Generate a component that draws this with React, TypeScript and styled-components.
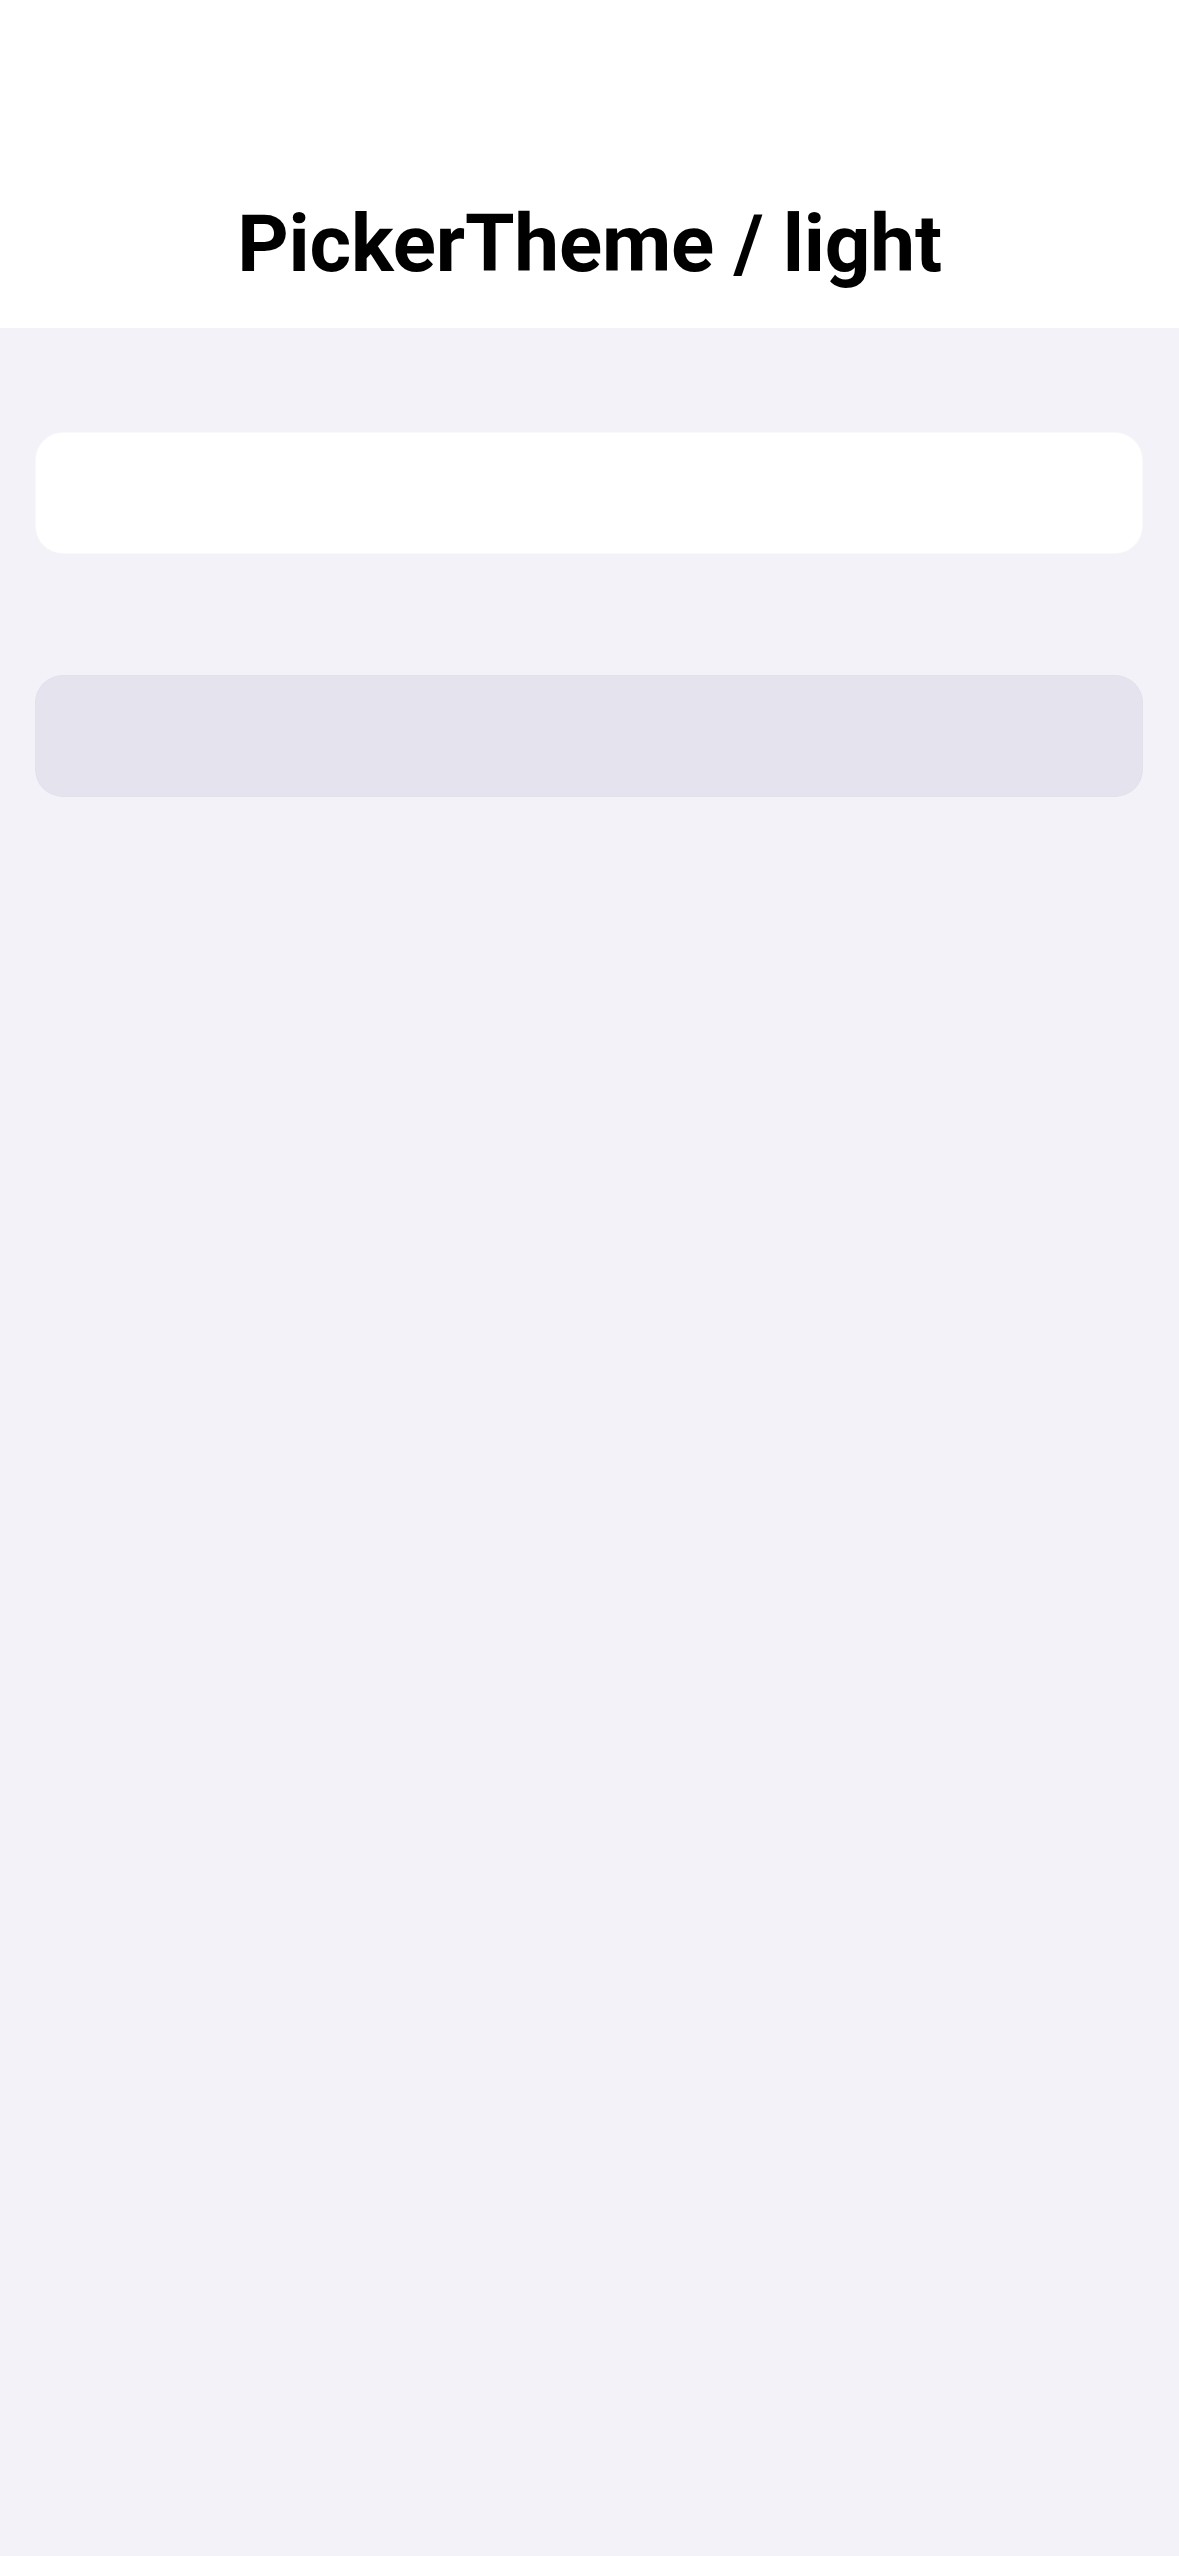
import React from "react";
import styled, { createGlobalStyle } from "styled-components";

const Global = createGlobalStyle`
  html, body { margin: 0; padding: 0; background: #f2f2f8; }
  body { font-family: Roboto, "Liberation Sans", Arial, sans-serif; }
  #root { min-height: 2556px; background: #f2f2f8; }
`;

const Page = styled.div`
  display: flex;
  flex-direction: column;
  min-height: 2556px;
  background: #f2f2f8;
`;

const Header = styled.header`
  height: 328px;
  background: #ffffff;
  display: flex;
  align-items: flex-end;
  justify-content: center;
  box-sizing: border-box;
  padding-bottom: 44px;
`;

const Title = styled.h1`
  margin: 0;
  font-family: Roboto, "Liberation Sans", Arial, sans-serif;
  font-weight: 700;
  font-size: 80px;
  letter-spacing: -0.2px;
  line-height: 1;
  color: #000000;
`;

const Content = styled.main`
  display: flex;
  flex-direction: column;
  gap: 121px;
  padding: 104px 36px 0 35px;
`;

const Card = styled.div<{ $tone: "white" | "fill" }>`
  height: 122px;
  border-radius: 28px;
  box-sizing: border-box;
  background: ${(p) => (p.$tone === "white" ? "#ffffff" : "#e4e3ee")};
  border: 1px solid
    ${(p) => (p.$tone === "white" ? "rgba(0,0,0,0.025)" : "rgba(0,0,0,0.01)")};
`;

export default function App() {
  return (
    <>
      <Global />
      <Page>
        <Header>
          <Title>PickerTheme / light</Title>
        </Header>
        <Content>
          <Card $tone="white" />
          <Card $tone="fill" />
        </Content>
      </Page>
    </>
  );
}
